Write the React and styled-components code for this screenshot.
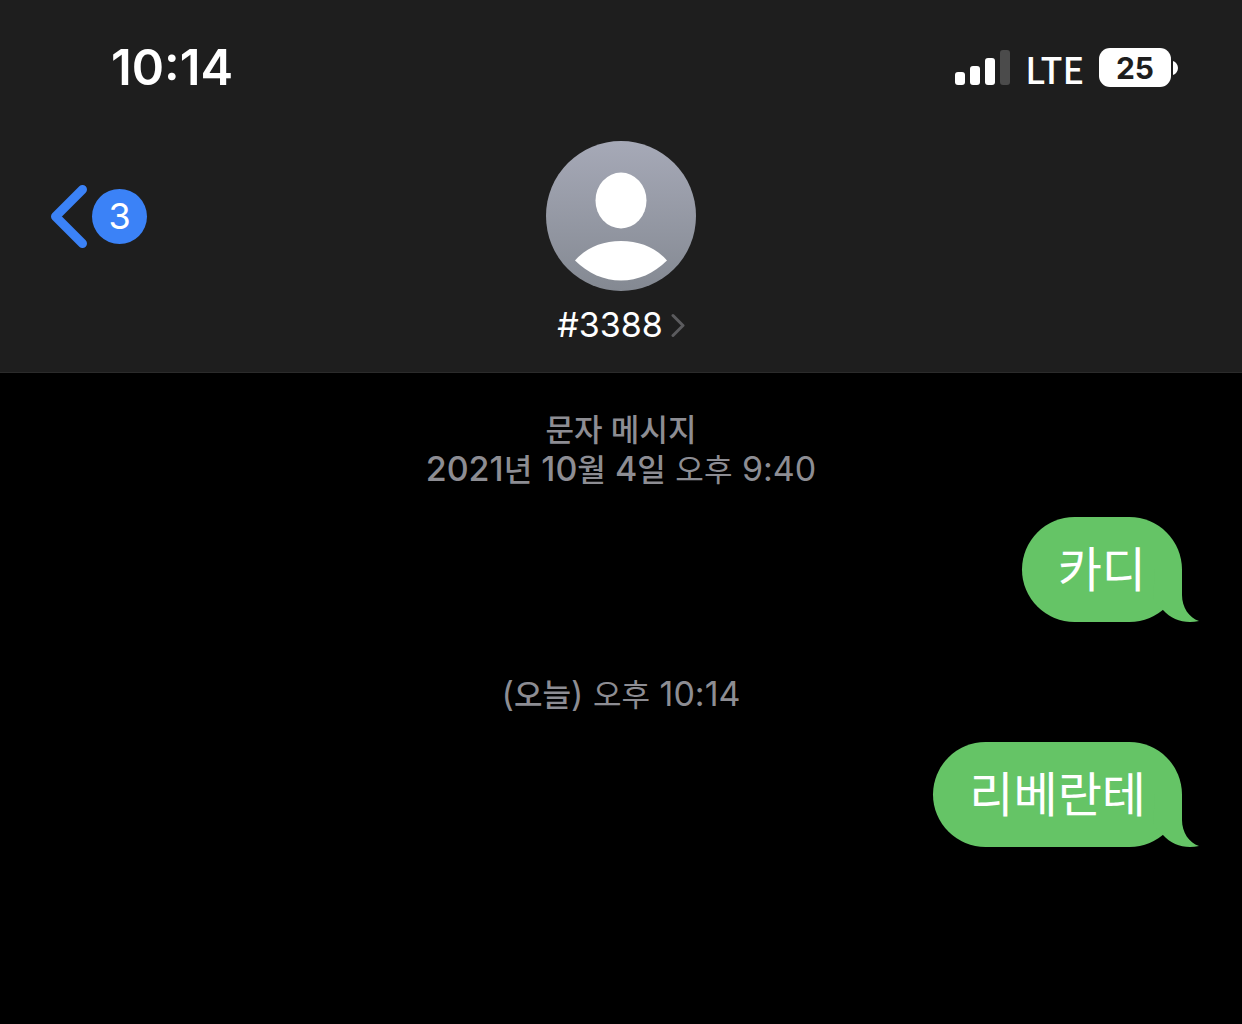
import styled, { createGlobalStyle } from 'styled-components'

const GlobalStyle = createGlobalStyle`
  * {
    box-sizing: border-box;
  }

  body {
    margin: 0;
    background: #000;
    color: #fff;
    font-family: Inter, 'Noto Sans CJK KR', sans-serif;
  }
`

const Header = styled.header`
  background: #1e1e1e;
  border-bottom: 1px solid #2b2b2b;
`

const StatusBar = styled.div`
  display: flex;
  align-items: center;
  justify-content: space-between;
  height: 135px;
  padding: 0 64px 0 111px;
`

const Clock = styled.time`
  font-size: 49px;
  font-weight: 600;
  line-height: 56px;
`

const StatusIcons = styled.div`
  display: flex;
  align-items: center;
  gap: 15px;
`

const Network = styled.span`
  font-family: 'Noto Sans CJK KR', sans-serif;
  font-size: 36px;
  font-weight: 500;
  line-height: 38px;
`

const Battery = styled.div`
  display: flex;
  align-items: center;
  gap: 2px;
`

const BatteryLevel = styled.span`
  width: 72px;
  height: 39px;
  border-radius: 11px;
  background: #fff;
  color: #1e1e1e;
  font-size: 30px;
  font-weight: 700;
  line-height: 40px;
  text-align: center;
`

const NavBar = styled.nav`
  display: grid;
  grid-template-columns: 1fr auto 1fr;
  align-items: start;
  padding: 6px 50px 27px;
`

const BackButton = styled.button`
  display: flex;
  align-items: center;
  justify-self: start;
  gap: 4px;
  margin-top: 43px;
  padding: 0;
  border: 0;
  background: none;
  color: #fff;
  font-family: inherit;
`

const UnreadCount = styled.span`
  width: 55px;
  height: 55px;
  border-radius: 50%;
  background: #3b82f7;
  font-size: 36px;
  font-weight: 400;
  line-height: 55px;
  text-align: center;
`

const ContactButton = styled.button`
  display: flex;
  flex-direction: column;
  align-items: center;
  gap: 14px;
  padding: 0;
  border: 0;
  background: none;
  color: #fff;
  font-family: inherit;
`

const ContactName = styled.span`
  display: flex;
  align-items: center;
  gap: 8px;
  font-size: 34px;
  line-height: 40px;
`

const Messages = styled.main`
  padding: 36px 60px;
`

const Stamp = styled.p`
  margin: 0;
  color: #8d8d93;
  font-size: 34px;
  line-height: 40px;
  text-align: center;
`

const Strong = styled.span`
  font-weight: 500;
`

const Hangul = styled.span`
  font-size: 31px;
  line-height: 1;
`

const BubbleRow = styled.div`
  display: flex;
  justify-content: flex-end;
  margin: 28px 0 52px;
`

const Bubble = styled.div`
  position: relative;
  padding: 0 36px;
  border-radius: 53px;
  background: #65c466;
  font-size: 48px;
  line-height: 105px;
`

const TailSvg = styled.svg`
  position: absolute;
  right: -17px;
  bottom: 0;
`

const Tail = () => (
  <TailSvg width="54" height="53" viewBox="0 0 54 53" aria-hidden="true">
    <path d="M10 0H37V26C37 38 44 49 54 52C40 55 27 51 18 41L8 30Z" fill="#65c466" />
  </TailSvg>
)

const SignalIcon = () => (
  <svg width="55" height="35" viewBox="0 0 55 35" aria-hidden="true">
    <rect x="0" y="22" width="10" height="13" rx="3" fill="#fff" />
    <rect x="15" y="16" width="10" height="19" rx="3" fill="#fff" />
    <rect x="30" y="8" width="10" height="27" rx="3" fill="#fff" />
    <rect x="45" y="0" width="10" height="35" rx="3" fill="#4b4b4b" />
  </svg>
)

const BatteryTip = () => (
  <svg width="5" height="14" viewBox="0 0 5 14" aria-hidden="true">
    <path d="M0 0C3 1 5 4 5 7S3 13 0 14Z" fill="#fff" />
  </svg>
)

const BackIcon = () => (
  <svg width="38" height="64" viewBox="0 0 38 64" fill="none" aria-hidden="true">
    <path d="M32.5 5.5L5.5 32.5L32.5 59.5" stroke="#3b82f7" strokeWidth="9" strokeLinecap="round" strokeLinejoin="round" />
  </svg>
)

const Avatar = () => (
  <svg width="150" height="150" viewBox="0 0 150 150" aria-hidden="true">
    <defs>
      <linearGradient id="avatar" x1="0" y1="0" x2="0" y2="1">
        <stop offset="0" stopColor="#a6a9b7" />
        <stop offset="1" stopColor="#848992" />
      </linearGradient>
    </defs>
    <circle cx="75" cy="75" r="75" fill="url(#avatar)" />
    <ellipse cx="75" cy="59.5" rx="25.5" ry="28" fill="#fff" />
    <path d="M29 119.5C40 107 56 100 75 100S110 107 121 119.5C108 132.5 92 139.5 75 139.5S42 132.5 29 119.5Z" fill="#fff" />
  </svg>
)

const DetailIcon = () => (
  <svg width="14" height="24" viewBox="0 0 14 24" fill="none" aria-hidden="true">
    <path d="M2 2.5L12 12.5L2 22.5" stroke="#5b5b5e" strokeWidth="3" strokeLinecap="round" strokeLinejoin="round" />
  </svg>
)

const Message = ({ children }) => (
  <BubbleRow>
    <Bubble>
      <Tail />
      {children}
    </Bubble>
  </BubbleRow>
)

const App = () => {
  return (
    <>
      <GlobalStyle />
      <Header>
        <StatusBar>
          <Clock>10:14</Clock>
          <StatusIcons>
            <SignalIcon />
            <Network>LTE</Network>
            <Battery>
              <BatteryLevel>25</BatteryLevel>
              <BatteryTip />
            </Battery>
          </StatusIcons>
        </StatusBar>
        <NavBar>
          <BackButton type="button">
            <BackIcon />
            <UnreadCount>3</UnreadCount>
          </BackButton>
          <ContactButton type="button">
            <Avatar />
            <ContactName>
              #3388
              <DetailIcon />
            </ContactName>
          </ContactButton>
        </NavBar>
      </Header>
      <Messages>
        <Stamp><Strong><Hangul>문자 메시지</Hangul></Strong></Stamp>
        <Stamp>
          <Strong>
            2021<Hangul>년</Hangul> 10<Hangul>월</Hangul> 4<Hangul>일</Hangul>
          </Strong>{' '}
          <Hangul>오후</Hangul> 9:40
        </Stamp>
        <Message>카디</Message>
        <Stamp>(<Strong><Hangul>오늘</Hangul></Strong>) <Hangul>오후</Hangul> 10:14</Stamp>
        <Message>리베란테</Message>
      </Messages>
    </>
  )
}

export default App
